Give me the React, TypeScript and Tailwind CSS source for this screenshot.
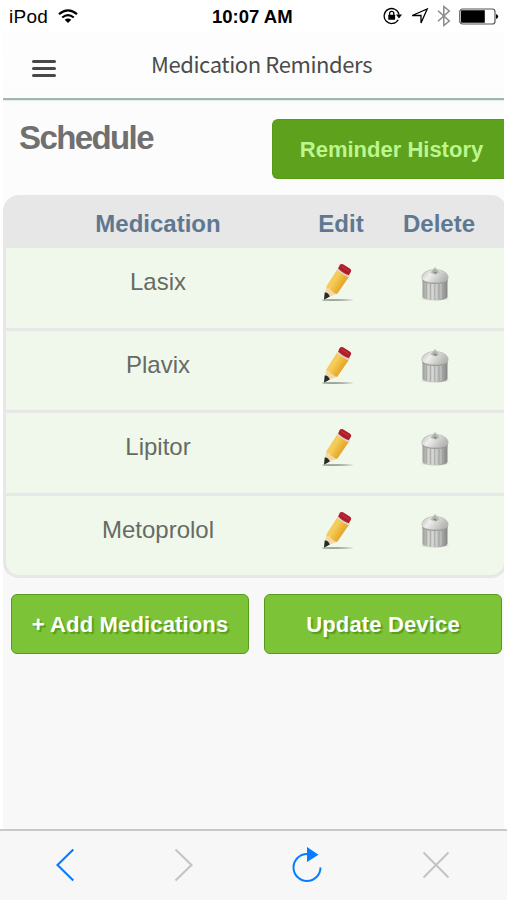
import type { ReactNode } from "react";

const medications = ["Lasix", "Plavix", "Lipitor", "Metoprolol"];

function StatusBar() {
    return (
        <div className="flex h-8 shrink-0 items-center bg-white pl-[9px] pr-2 text-black">
            <div className="flex w-[203px] items-center gap-[10px] pt-px text-[19px] leading-8 tracking-[0.3px]">
                <span>iPod</span>
                <svg width="20" height="15" viewBox="0 0 20 15" fill="none" stroke="currentColor" strokeWidth="2.2">
                    <path d="M1 5.2Q10-2.4 19 5.2" />
                    <path d="M4.2 8.5Q10 3.6 15.8 8.5" />
                    <path d="M6.7 10.8Q10 8 13.3 10.8L10 14Z" fill="currentColor" stroke="none" />
                </svg>
            </div>
            <span className="whitespace-nowrap pt-px text-[18.5px] font-bold leading-8">10:07 AM</span>
            <div className="ml-auto flex items-center">
                <svg width="19" height="18" viewBox="0 0 19 18" fill="none" stroke="currentColor" strokeWidth="1.3">
                    <path d="M15.2 12.7A7.5 7.5 0 1 1 16 7.5" />
                    <path d="M13 7.4h6l-3 4z" fill="currentColor" stroke="none" />
                    <rect x="5.3" y="7.8" width="6.8" height="5" rx=".5" fill="currentColor" stroke="none" />
                    <path d="M6.6 8V6.5a2.1 2.1 0 0 1 4.2 0V8" />
                </svg>
                <svg className="ml-[9px]" width="18" height="16" viewBox="0 0 18 16" fill="none" stroke="currentColor" strokeWidth="1.3">
                    <path d="M1.2 7.5 16.2 1 10 15V7.5Z" />
                </svg>
                <svg className="ml-2 text-[#8b8b8b]" width="14" height="22" viewBox="0 0 14 22" fill="none" stroke="currentColor" strokeWidth="1.5">
                    <path d="m1 5.8 11.3 10.2L6.8 20.5V1.5l5.5 4.5L1 16.2" />
                </svg>
                <svg className="ml-2" width="40" height="17" viewBox="0 0 40 17">
                    <rect x=".8" y="1" width="35.2" height="15" rx="2.8" fill="#fff" stroke="#555" strokeWidth="1.2" />
                    <path d="M3 2.3h22.8v12.4H3a1 1 0 0 1-1-1V3.3a1 1 0 0 1 1-1z" />
                    <path d="M37 6q2.2.7 2.2 2.5T37 11z" />
                </svg>
            </div>
        </div>
    );
}

function PencilIcon() {
    return (
        <svg width="34" height="40" viewBox="0 0 34 40">
            <defs>
                <linearGradient id="wood" x1="0" y1=".2" x2=".9" y2=".8">
                    <stop offset="0" stopColor="#f3c650" />
                    <stop offset=".4" stopColor="#f6cd58" />
                    <stop offset=".7" stopColor="#e8ae32" />
                    <stop offset="1" stopColor="#d99a28" />
                </linearGradient>
                <linearGradient id="ground">
                    <stop offset="0" stopColor="#8a9188" />
                    <stop offset=".6" stopColor="#a9b0a6" />
                    <stop offset="1" stopColor="#cbd3c7" />
                </linearGradient>
            </defs>
            <ellipse cx="17.5" cy="38" rx="15.5" ry="1.1" fill="url(#ground)" />
            <path d="M6.3 24.5 17 31.8 9.5 34.8 4 37.6Z" fill="#f2d8a6" />
            <path d="M17 7.8 28.8 15 17.3 31.8Q14.5 32 13 29.4 10 29 9.8 26.8 7 26.6 6.3 24.5Z" fill="url(#wood)" />
            <path d="M4.7 30.5Q8 30 9.8 34.6L4 37.8Z" fill="#25292a" />
            <path d="m18 6.2 12 7.2-1.3 2.3-12-7.2Z" fill="#ddd5c8" />
            <path d="M19.7 3q1.2-1.8 3.3-.7l6.8 4.2q2.2 1.4 1.1 3.2l-2 3.5q-5.6-1.6-10.8-6.8Z" fill="#b01e2b" />
            <path d="m21.5 4.4 7.2 4.5" stroke="#c53a44" strokeWidth="1" />
        </svg>
    );
}

function TrashIcon() {
    return (
        <svg width="32" height="38" viewBox="0 0 32 38">
            <defs>
                <linearGradient id="can">
                    <stop offset="0" stopColor="#9a9b98" />
                    <stop offset=".2" stopColor="#c8c9c6" />
                    <stop offset=".45" stopColor="#d0d1ce" />
                    <stop offset=".75" stopColor="#a9aba8" />
                    <stop offset="1" stopColor="#858784" />
                </linearGradient>
                <linearGradient id="lid" x1="0" x2="1" y1="0" y2=".4">
                    <stop offset="0" stopColor="#b9bbb7" />
                    <stop offset=".4" stopColor="#eeeeec" />
                    <stop offset="1" stopColor="#b5b7b3" />
                </linearGradient>
            </defs>
            <ellipse cx="16" cy="34.5" rx="14" ry="1.8" fill="#dde4d9" />
            <path d="M3.5 13h25v20q-1.5 3.4-12.5 3.4T3.5 33Z" fill="url(#can)" />
            <path d="M7.5 19v15M11.5 20v15.5M15.7 20v16M20 20v15.5M24.2 19v15" stroke="#a3a5a1" strokeWidth=".8" />
            <path d="M9.5 20v14.5M13.6 20v15.5M17.8 20v15.5M22 20v14.5" stroke="#dcdddb" strokeWidth=".6" />
            <path d="M3.5 15.5q12.5 6 25 0v2q-12.5 5-25 0Z" fill="#989a96" />
            <path d="M2.8 13.5C3 8.5 9 5.5 16 5.5s13 3 13.2 8c0 3.7-5.7 5.2-13.2 5.2s-13.2-1.5-13.2-5.2Z" fill="url(#lid)" stroke="#b0b2ae" strokeWidth=".6" />
            <path d="M11.8 8.5 16 3.5l4.2 5L16 10.2Z" fill="#b0b2ae" stroke="#c0c2be" strokeWidth="1" />
            <path d="m15 8 2.6 1.5" stroke="#7c7e7b" strokeWidth="1.4" />
        </svg>
    );
}

function ActionButton({ children }: { children: ReactNode }) {
    return (
        <button className="h-[60px] w-[238px] whitespace-nowrap rounded-[6px] border-[1.5px] border-[#559b1c] bg-[#7cc338] pt-[2px] text-[22px] font-bold leading-none tracking-[0.15px] text-white [text-shadow:2px_2px_1px_#569e1c]">
            {children}
        </button>
    );
}

function MedicationTable() {
    return (
        <div className="mt-4 w-[504px] shrink-0 overflow-hidden rounded-[16px] border-x-[3px] border-b-[3px] border-[#e7e7e7] bg-[#e7e7e7]">
            <div className="grid h-[53px] grid-cols-[304px_62px_134px] items-center pt-[4px] text-center text-[24px] font-bold text-[#5f7892]">
                <span>Medication</span>
                <span>Edit</span>
                <span>Delete</span>
            </div>
            <div className="flex flex-col gap-[3px]">
                {medications.map((name) => (
                    <div
                        key={name}
                        className="grid h-[79.5px] grid-cols-[304px_62px_134px] items-start bg-[#f0f8ec] text-center text-[24px] text-[#666b65]"
                    >
                        <span className="pt-[17px] leading-[34px]">{name}</span>
                        <span className="flex justify-center pr-[8px] pt-[14px]">
                            <PencilIcon />
                        </span>
                        <span className="flex justify-center pr-[8px] pt-[15.5px]">
                            <TrashIcon />
                        </span>
                    </div>
                ))}
            </div>
        </div>
    );
}

function BrowserToolbar() {
    return (
        <div className="grid h-[71px] shrink-0 grid-cols-[130px_118px_118px_139px] items-center justify-items-center border-t-2 border-[#c8c8c8] bg-[#f7f7f7] pb-[2px]">
            <svg width="20" height="34" viewBox="0 0 20 34" fill="none" stroke="#087cff" strokeWidth="2.1">
                <path d="M18.3 1.5 2.5 17l15.8 15.5" />
            </svg>
            <svg className="ml-[-11px]" width="20" height="34" viewBox="0 0 20 34" fill="none" stroke="#c4c4c4" strokeWidth="2.1">
                <path d="M1.5 1.5 17.5 17l-16 15.5" />
            </svg>
            <svg width="32" height="36" viewBox="0 0 32 36" fill="none" stroke="#087cff" strokeWidth="2">
                <path d="M29.5 20.5A13.5 13.5 0 1 1 16 7" />
                <path d="M16 0v15l11.5-7.2Z" fill="#087cff" stroke="none" />
            </svg>
            <svg width="28" height="28" viewBox="0 0 28 28" fill="none" stroke="#c4c4c4" strokeWidth="2">
                <path d="m1.5 1.5 25 25M26.5 1.5l-25 25" />
            </svg>
        </div>
    );
}

export default function App() {
    return (
        <div className="flex h-[900px] w-[507px] flex-col overflow-hidden bg-white font-['Liberation_Sans',Arial,sans-serif]">
            <StatusBar />
            <main className="mx-[3px] flex min-h-0 flex-1 flex-col overflow-hidden bg-gradient-to-b from-[#fdfdfd] to-[#f8f8f8] to-70%">
                <header className="grid h-[68px] shrink-0 grid-cols-[82px_353px_1fr] items-center border-b-2 border-[#a2b6af] shadow-[0_1px_1px_#e4eeea]">
                    <div className="flex w-6 flex-col gap-1 justify-self-center pt-[7px]">
                        <span className="h-[3px] rounded-full bg-[#484848]" />
                        <span className="h-[3px] rounded-full bg-[#484848]" />
                        <span className="h-[3px] rounded-full bg-[#484848]" />
                    </div>
                    <h1 className="pb-[4px] text-center font-['Noto_Sans_CJK_JP',sans-serif] text-[22px] leading-8 tracking-[-0.4px] text-[#4b4b4b]">
                        Medication Reminders
                    </h1>
                </header>
                <div className="mt-[19px] flex h-[60px] shrink-0 justify-between">
                    <h2 className="pl-4 text-[33px] font-bold leading-[38px] tracking-[-1.6px] text-[#707070]">Schedule</h2>
                    <button className="h-[60px] w-[232px] whitespace-nowrap rounded-l-[6px] border-y border-l border-[#569b18] bg-[#5ea11d] pl-1.5 text-[22px] font-bold text-[#bcf68f]">
                        Reminder History
                    </button>
                </div>
                <MedicationTable />
                <div className="ml-2 mt-4 flex gap-[15px]">
                    <ActionButton>+ Add Medications</ActionButton>
                    <ActionButton>Update Device</ActionButton>
                </div>
            </main>
            <BrowserToolbar />
        </div>
    );
}
